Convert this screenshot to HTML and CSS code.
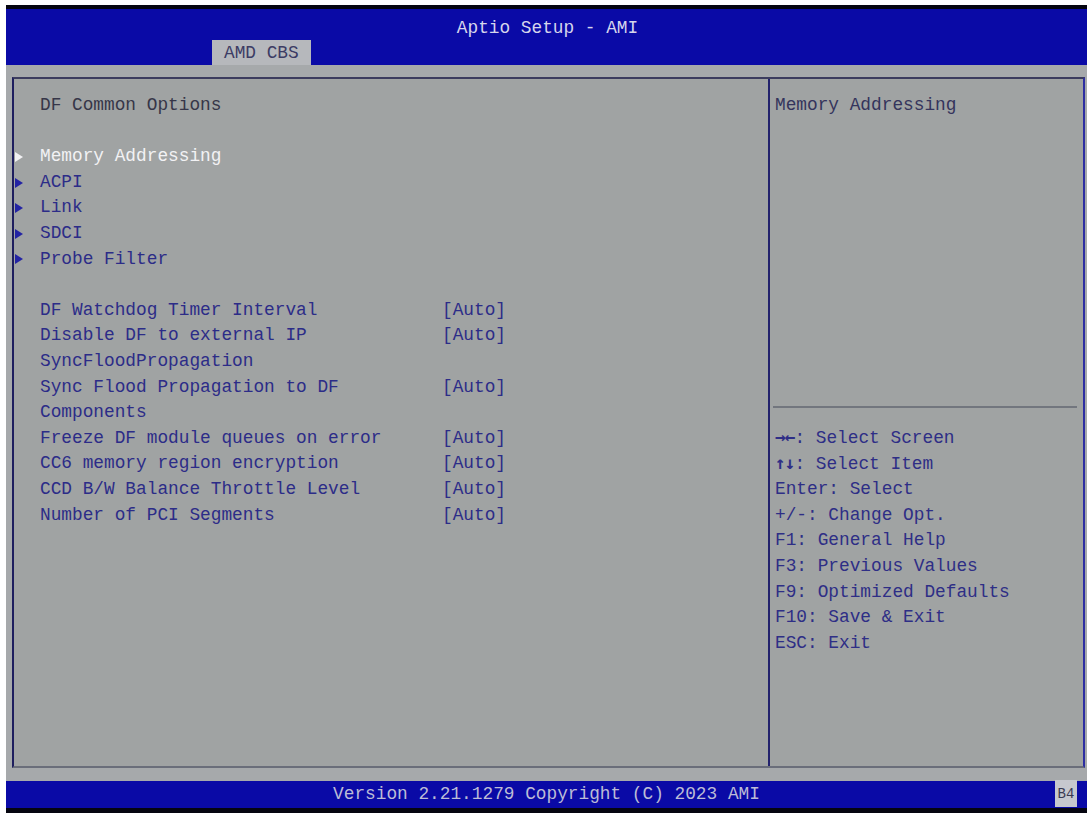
FILE: index.html
```html
<!DOCTYPE html>
<html lang="en">
<head>
	<meta charset="UTF-8">
	<title>Aptio Setup - AMI</title>
	<link rel="stylesheet" href="styles.css">
</head>
<body>
<div class="screen">
	<!-- header -->
	<div class="hdr">
		<div class="hdr-title">Aptio Setup - AMI</div>
		<div class="tabs"><div class="tab">AMD CBS</div></div>
	</div>
	<!-- main panel -->
	<div class="main">
		<div class="panel">
			<div class="left">
				<div class="row dark">DF Common Options</div>
				<div class="row"></div>
				<div class="row sub sel">Memory Addressing</div>
				<div class="row sub">ACPI</div>
				<div class="row sub">Link</div>
				<div class="row sub">SDCI</div>
				<div class="row sub">Probe Filter</div>
				<div class="row"></div>
				<div class="opt"><span>DF Watchdog Timer Interval</span><span>[Auto]</span></div>
				<div class="opt"><span>Disable DF to external IP<br>SyncFloodPropagation</span><span>[Auto]</span></div>
				<div class="opt"><span>Sync Flood Propagation to DF<br>Components</span><span>[Auto]</span></div>
				<div class="opt"><span>Freeze DF module queues on error</span><span>[Auto]</span></div>
				<div class="opt"><span>CC6 memory region encryption</span><span>[Auto]</span></div>
				<div class="opt"><span>CCD B/W Balance Throttle Level</span><span>[Auto]</span></div>
				<div class="opt"><span>Number of PCI Segments</span><span>[Auto]</span></div>
			</div>
			<div class="right">
				<div class="help-desc">Memory Addressing</div>
				<div class="help-keys">
					<div class="key"><span class="arr">&rarr;&larr;</span>: Select Screen</div>
					<div class="key"><span class="arr">&uarr;&darr;</span>: Select Item</div>
					<div class="key">Enter: Select</div>
					<div class="key">+/-: Change Opt.</div>
					<div class="key">F1: General Help</div>
					<div class="key">F3: Previous Values</div>
					<div class="key">F9: Optimized Defaults</div>
					<div class="key">F10: Save &amp; Exit</div>
					<div class="key">ESC: Exit</div>
				</div>
			</div>
		</div>
	</div>
	<!-- footer -->
	<div class="ftr">
		<div></div>
		<div class="ftr-text">Version 2.21.1279 Copyright (C) 2023 AMI</div>
		<div class="code">B4</div>
	</div>
</div>
</body>
</html>
```

FILE: styles.css
```css
*{margin:0;padding:0;box-sizing:border-box;}
body{background-color:#fff;font-family:"Liberation Mono","DejaVu Sans Mono",monospace;font-size:17.8px;}
.screen{
	margin:5px 0 0 6px;
	width:1081px;height:808px;
	padding:4px 0 5px;
	background-color:#050510;
	display:flex;flex-direction:column;
}
.hdr{height:56px;background-color:#0a0aa6;padding-top:6px;}
.hdr-title{height:24px;line-height:26px;text-align:center;color:#d6d6ec;padding-left:2px;}
.tabs{margin-top:1px;padding-left:206px;}
.tab{display:inline-block;height:25px;line-height:27px;padding:0 12px;background-color:#b6b8bc;color:#3c3c64;}
.main{flex:1;background-color:#a6a9ab;padding:12px 2px 13px 6px;display:flex;}
.panel{
	flex:1;display:flex;
	background-color:#a0a3a3;
	border-top:2px solid #3c3c5e;
	border-left:2px solid #1e1e5e;
	border-bottom:2px solid #6a6e7a;
	border-right:2px solid #2e2ea2;
}
.left{width:754px;padding:14px 0 0 26px;color:#2c2c88;line-height:25.6px;}
.row{height:25.6px;}
.dark{color:#363648;}
.sub{margin-left:-25px;display:flex;align-items:center;}
.sub::before{
	content:"";
	width:0;height:0;
	border-top:5.5px solid transparent;
	border-bottom:5.5px solid transparent;
	border-left:8px solid #2323a4;
	margin:0 17px 0 0;
}
.sel{color:#f2f2f4;}
.sel::before{border-left-color:#f2f2f4;}
.opt{display:grid;grid-template-columns:402px auto;}
.right{flex:1;border-left:2px solid #22226c;display:flex;flex-direction:column;line-height:25.6px;}
.help-desc{height:329px;padding:14px 0 0 2px;color:#34345c;border-bottom:2px solid #72767e;margin:0 6px 0 3px;}
.help-keys{padding:18px 0 0 5px;color:#2e2e86;}
.key{height:25.6px;}
.arr{font-family:"DejaVu Sans Mono",monospace;font-weight:bold;letter-spacing:-1px;line-height:0;}
.ftr{height:27px;background-color:#0a0aa6;display:grid;grid-template-columns:1fr auto 1fr;align-items:center;}
.ftr-text{color:#bcbcd6;line-height:27px;}
.code{justify-self:end;margin-right:10px;width:22px;height:27px;margin-top:-2px;background-color:#c6c8ce;color:#3a3a52;font-size:14px;line-height:29px;text-align:center;}
```
